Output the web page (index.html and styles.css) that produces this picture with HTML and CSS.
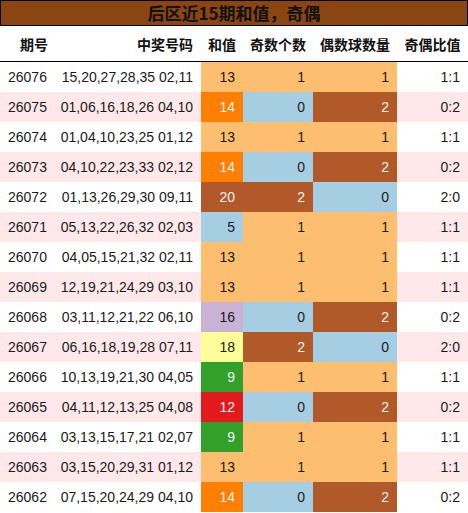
FILE: index.html
```html
<!DOCTYPE html>
<html lang="zh">
<head>
<meta charset="utf-8">
<link rel="stylesheet" href="styles.css">
</head>
<body>
<div class="title">后区近15期和值，奇偶</div>
<table class="tbl">
<colgroup>
<col class="c1"><col class="c2"><col class="c3"><col class="c4"><col class="c5"><col class="c6">
</colgroup>
<thead>
<tr><th class="hl">期号</th><th class="hr">中奖号码</th><th class="hc">和值</th><th class="hc">奇数个数</th><th class="hc">偶数球数量</th><th class="hc">奇偶比值</th></tr>
</thead>
<tbody>
<tr><td class="id">26076</td><td class="num">15,20,27,28,35 02,11</td><td class="v lo">13</td><td class="v lo">1</td><td class="v lo">1</td><td class="v">1:1</td></tr>
<tr class="alt"><td class="id">26075</td><td class="num">01,06,16,18,26 04,10</td><td class="v or">14</td><td class="v bl">0</td><td class="v br">2</td><td class="v">0:2</td></tr>
<tr><td class="id">26074</td><td class="num">01,04,10,23,25 01,12</td><td class="v lo">13</td><td class="v lo">1</td><td class="v lo">1</td><td class="v">1:1</td></tr>
<tr class="alt"><td class="id">26073</td><td class="num">04,10,22,23,33 02,12</td><td class="v or">14</td><td class="v bl">0</td><td class="v br">2</td><td class="v">0:2</td></tr>
<tr><td class="id">26072</td><td class="num">01,13,26,29,30 09,11</td><td class="v br">20</td><td class="v br">2</td><td class="v bl">0</td><td class="v">2:0</td></tr>
<tr class="alt"><td class="id">26071</td><td class="num">05,13,22,26,32 02,03</td><td class="v bl">5</td><td class="v lo">1</td><td class="v lo">1</td><td class="v">1:1</td></tr>
<tr><td class="id">26070</td><td class="num">04,05,15,21,32 02,11</td><td class="v lo">13</td><td class="v lo">1</td><td class="v lo">1</td><td class="v">1:1</td></tr>
<tr class="alt"><td class="id">26069</td><td class="num">12,19,21,24,29 03,10</td><td class="v lo">13</td><td class="v lo">1</td><td class="v lo">1</td><td class="v">1:1</td></tr>
<tr><td class="id">26068</td><td class="num">03,11,12,21,22 06,10</td><td class="v pu">16</td><td class="v bl">0</td><td class="v br">2</td><td class="v">0:2</td></tr>
<tr class="alt"><td class="id">26067</td><td class="num">06,16,18,19,28 07,11</td><td class="v ye">18</td><td class="v br">2</td><td class="v bl">0</td><td class="v">2:0</td></tr>
<tr><td class="id">26066</td><td class="num">10,13,19,21,30 04,05</td><td class="v gr">9</td><td class="v lo">1</td><td class="v lo">1</td><td class="v">1:1</td></tr>
<tr class="alt"><td class="id">26065</td><td class="num">04,11,12,13,25 04,08</td><td class="v rd">12</td><td class="v bl">0</td><td class="v br">2</td><td class="v">0:2</td></tr>
<tr><td class="id">26064</td><td class="num">03,13,15,17,21 02,07</td><td class="v gr">9</td><td class="v lo">1</td><td class="v lo">1</td><td class="v">1:1</td></tr>
<tr class="alt"><td class="id">26063</td><td class="num">03,15,20,29,31 01,12</td><td class="v lo">13</td><td class="v lo">1</td><td class="v lo">1</td><td class="v">1:1</td></tr>
<tr><td class="id">26062</td><td class="num">07,15,20,24,29 04,10</td><td class="v or">14</td><td class="v bl">0</td><td class="v br">2</td><td class="v">0:2</td></tr>
</tbody>
</table>
</body>
</html>
```

FILE: styles.css
```css
html, body {
  margin: 0;
  padding: 0;
  background: #ffffff;
}
body {
  width: 468px;
  font-family: "Liberation Sans", "Noto Sans CJK SC", sans-serif;
  color: #1a1a1a;
}
.title {
  box-sizing: border-box;
  height: 26px;
  border: 1px solid #000;
  background: #8b4513;
  color: #111;
  font-family: "Noto Sans CJK SC", sans-serif;
  font-weight: bold;
  font-size: 17px;
  line-height: 24px;
  text-align: center;
}
.tbl {
  width: 468px;
  border-collapse: collapse;
  table-layout: fixed;
  font-size: 14px;
}
.c1 { width: 53px; }
.c2 { width: 148px; }
.c3 { width: 42px; }
.c4 { width: 70px; }
.c5 { width: 84px; }
.c6 { width: 71px; }
thead th {
  height: 35px;
  padding: 0 8px;
  font-family: "Noto Sans CJK SC", sans-serif;
  font-weight: bold;
  font-size: 14px;
  color: #111;
  border-bottom: 1px solid #000;
  white-space: nowrap;
}
.hc { text-align: center; padding: 0; }
.hl { text-align: left; padding-left: 20px; }
.hr { text-align: right; }
tbody td {
  height: 30px;
  padding: 0 8px 0 7px;
  box-sizing: border-box;
  white-space: nowrap;
  line-height: 30px;
}
tbody tr.alt td { background: #ffe8ea; }
td.id { text-align: left; padding-left: 8px; }
td.num { text-align: right; padding-right: 8px; }
td.v { text-align: right; }
tbody tr td.lo { background: #fdbf6f; }
tbody tr td.or { background: #ff7f00; color: #f3f3f3; }
tbody tr td.bl { background: #a6cee3; }
tbody tr td.br { background: #b15928; color: #f3f3f3; }
tbody tr td.pu { background: #cab2d6; }
tbody tr td.ye { background: #ffff99; }
tbody tr td.gr { background: #33a02c; color: #f3f3f3; }
tbody tr td.rd { background: #e31a1c; color: #f3f3f3; }
```
